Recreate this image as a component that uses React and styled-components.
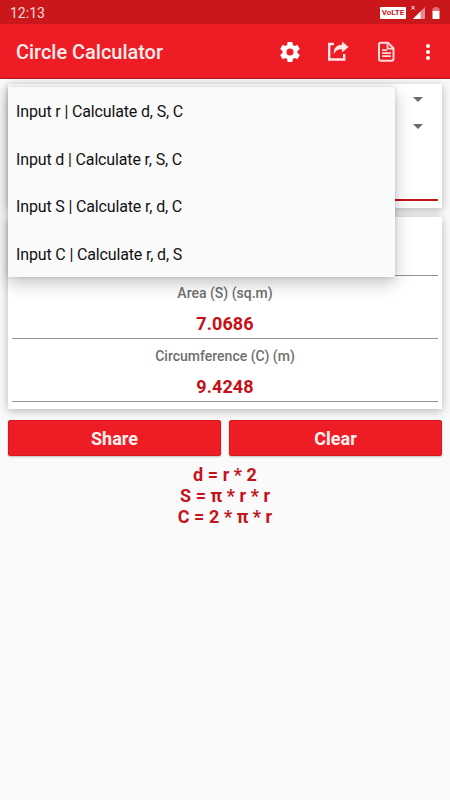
import React, { useState } from "react";
import styled, { createGlobalStyle } from "styled-components";

const GlobalStyle = createGlobalStyle`
  * {
    box-sizing: border-box;
  }
  body {
    margin: 0;
    background: #fafafa;
    font-family: Roboto, sans-serif;
  }
`;

const Screen = styled.div`
  width: 450px;
  height: 800px;
  overflow: hidden;
  background: #fafafa;
`;

const StatusBar = styled.div`
  display: flex;
  align-items: center;
  justify-content: space-between;
  height: 24px;
  padding: 1px 10px 0 10px;
  background: #ca171b;
  color: #fbdcdc;
  font-size: 14px;
`;

const StatusIcons = styled.div`
  display: flex;
  align-items: center;
  gap: 5px;
`;

const Volte = styled.span`
  display: flex;
  align-items: center;
  justify-content: center;
  width: 26px;
  height: 12px;
  border-radius: 1px;
  background: #fff;
  color: #ca171b;
  font-size: 8px;
  font-weight: 700;
`;

const AppBar = styled.header`
  display: flex;
  align-items: center;
  height: 55px;
  padding: 0 4px 0 16px;
  background: #ee1c25;
  border-bottom: 1px solid #b3161c;
`;

const Title = styled.h1`
  flex: 1;
  margin: 0;
  padding-top: 2px;
  color: #ffecec;
  font-size: 20px;
  font-weight: 500;
  letter-spacing: -0.03px;
`;

const Action = styled.button`
  display: flex;
  align-items: center;
  justify-content: center;
  width: ${(props) => props.$width || 48}px;
  height: 48px;
  padding: 1px 0 0;
  border: 0;
  background: none;
`;

const Content = styled.main`
  position: relative;
  padding: 5px 8px 0;
`;

const Card = styled.section`
  height: ${(props) => props.$height}px;
  margin-bottom: ${(props) => props.$gap}px;
  padding: 0 4px;
  background: #fff;
  box-shadow: 0 2px 9px rgba(0, 0, 0, 0.28);
`;

const Select = styled.div`
  display: flex;
  align-items: center;
  justify-content: flex-end;
  height: 27px;
  padding: 3px 15px 0 0;
`;

const Arrow = styled.span`
  border: 5px solid transparent;
  border-top-color: #6b6b6b;
  border-bottom: 0;
`;

const Input = styled.div`
  height: 62.5px;
  border-bottom: 2px solid #c4161c;
`;

const Result = styled.div`
  display: flex;
  flex-direction: column;
  align-items: center;
  height: ${(props) => props.$height || 63}px;
  padding-top: 8px;
  border-bottom: 1px solid #929292;
`;

const Label = styled.div`
  color: #6f6f6f;
  font-size: 14px;
  font-weight: 500;
  line-height: 18px;
`;

const Value = styled.div`
  margin-top: 11px;
  color: #c70f17;
  font-size: 18px;
  font-weight: 700;
  line-height: 22px;
  letter-spacing: 0.1px;
`;

const Buttons = styled.div`
  display: flex;
  gap: 8px;
`;

const Button = styled.button`
  flex: 1;
  height: 36px;
  padding: 1px 0 0;
  border: 1px solid #d8171f;
  border-radius: 2px;
  background: #ee1c25;
  color: #fff0f0;
  font: 700 18px Roboto, sans-serif;
  box-shadow: 0 1px 2px rgba(0, 0, 0, 0.25);
`;

const Formulas = styled.div`
  padding-top: 8px;
  color: #c4141b;
  font-size: 18px;
  font-weight: 700;
  line-height: 21px;
  letter-spacing: 0.05px;
  text-align: center;
`;

// open spinner list, floats over both cards
const Popup = styled.ul`
  position: absolute;
  top: 8px;
  left: 8px;
  width: 386.5px;
  margin: 0;
  padding: 0;
  list-style: none;
  background: #fafafa;
  box-shadow: 0 6px 16px rgba(0, 0, 0, 0.24), 0 0 4px rgba(0, 0, 0, 0.14);
`;

const Option = styled.li`
  display: flex;
  align-items: center;
  height: 47.5px;
  padding: 2px 8px 0;
  color: #111;
  font-size: 16px;
  letter-spacing: -0.15px;
`;

const options = [
  "Input r | Calculate d, S, C",
  "Input d | Calculate r, S, C",
  "Input S | Calculate r, d, C",
  "Input C | Calculate r, d, S",
];

const results = [
  { label: "Area (S) (sq.m)", value: "7.0686" },
  { label: "Circumference (C) (m)", value: "9.4248" },
];

const formulas = ["d = r * 2", "S = π * r * r", "C = 2 * π * r"];

const SignalIcon = () => (
  <svg width="16" height="16" viewBox="0 0 16 16">
    <path d="M14 2v12H2z" fill="#e98b8d" />
    <path d="M9.5 6.5V14H2z" fill="#fff" />
    <path d="M.5 1l3 3.5M3.5 1l-3 3.5" stroke="#fff" strokeWidth="1" />
  </svg>
);

const BatteryIcon = () => (
  <svg width="8" height="14" viewBox="0 0 8 14">
    <path d="M2.3 1h3.4v1.2h1.8V6h-7V2.2h1.8z" fill="#e07376" />
    <path d="M.5 5h7v8h-7z" fill="#fff" />
  </svg>
);

const GearIcon = () => (
  <svg width="24" height="24" viewBox="0 0 24 24" fill="#fff">
    <path d="M19.43 12.98c.04-.32.07-.64.07-.98s-.03-.66-.07-.98l2.11-1.65c.19-.15.24-.42.12-.64l-2-3.46c-.12-.22-.39-.3-.61-.22l-2.49 1c-.52-.4-1.08-.73-1.69-.98l-.38-2.65A.49.49 0 0 0 14 2h-4c-.25 0-.46.18-.49.42l-.38 2.65c-.61.25-1.17.59-1.69.98l-2.49-1c-.23-.09-.49 0-.61.22l-2 3.46c-.13.22-.07.49.12.64l2.11 1.65c-.04.32-.07.65-.07.98s.03.66.07.98l-2.11 1.65c-.19.15-.24.42-.12.64l2 3.46c.12.22.39.3.61.22l2.49-1c.52.4 1.08.73 1.69.98l.38 2.65c.03.24.24.42.49.42h4c.25 0 .46-.18.49-.42l.38-2.65c.61-.25 1.17-.59 1.69-.98l2.49 1c.23.09.49 0 .61-.22l2-3.46c.12-.22.07-.49-.12-.64zM12 15.5a3.5 3.5 0 1 1 0-7 3.5 3.5 0 0 1 0 7z" />
  </svg>
);

const ShareIcon = () => (
  <svg width="24" height="24" viewBox="0 0 24 24" fill="none">
    <path d="M8 4H3.2v15.5h15V14" stroke="#ffe6e6" strokeWidth="2.4" />
    <path
      d="M16 1.5L22.5 7 16 12.5V9.3c-4 0-6.5 1-8 5C7 8.5 10.5 5 16 4.8z"
      fill="#ffe6e6"
    />
  </svg>
);

const DocumentIcon = () => (
  <svg width="24" height="24" viewBox="0 0 24 24" fill="none" stroke="#ffdada">
    <path
      d="M7 2.8h7l5.5 5.4v10.5a2 2 0 0 1-2 2H7a2 2 0 0 1-2-2V4.8a2 2 0 0 1 2-2z"
      strokeWidth="2"
    />
    <path d="M13.5 3.5v5.2H19" strokeWidth="1.7" />
    <path d="M8 10.2h5M8 13.2h9M8 16.2h9" strokeWidth="1.8" />
  </svg>
);

const MoreIcon = () => (
  <svg width="24" height="24" viewBox="0 0 24 24" fill="#fff">
    <circle cx="12" cy="6" r="2" />
    <circle cx="12" cy="12" r="2" />
    <circle cx="12" cy="18" r="2" />
  </svg>
);

const App = () => {
  const [open, setOpen] = useState(true);

  return (
    <>
      <GlobalStyle />
      <Screen>
        <StatusBar>
          <span>12:13</span>
          <StatusIcons>
            <Volte>VoLTE</Volte>
            <SignalIcon />
            <BatteryIcon />
          </StatusIcons>
        </StatusBar>
        <AppBar>
          <Title>Circle Calculator</Title>
          <Action>
            <GearIcon />
          </Action>
          <Action>
            <ShareIcon />
          </Action>
          <Action>
            <DocumentIcon />
          </Action>
          <Action $width={36}>
            <MoreIcon />
          </Action>
        </AppBar>
        <Content>
          <Card $height={123.5} $gap={9.5}>
            <Select onClick={() => setOpen(!open)}>
              <Arrow />
            </Select>
            <Select>
              <Arrow />
            </Select>
            <Input />
          </Card>
          <Card $height={192} $gap={11}>
            <Result $height={59} />
            {results.map((item) => (
              <Result key={item.label}>
                <Label>{item.label}</Label>
                <Value>{item.value}</Value>
              </Result>
            ))}
          </Card>
          {open && (
            <Popup>
              {options.map((option) => (
                <Option key={option} onClick={() => setOpen(false)}>
                  {option}
                </Option>
              ))}
            </Popup>
          )}
          <Buttons>
            <Button>Share</Button>
            <Button>Clear</Button>
          </Buttons>
          <Formulas>
            {formulas.map((formula) => (
              <div key={formula}>{formula}</div>
            ))}
          </Formulas>
        </Content>
      </Screen>
    </>
  );
};

export default App;
